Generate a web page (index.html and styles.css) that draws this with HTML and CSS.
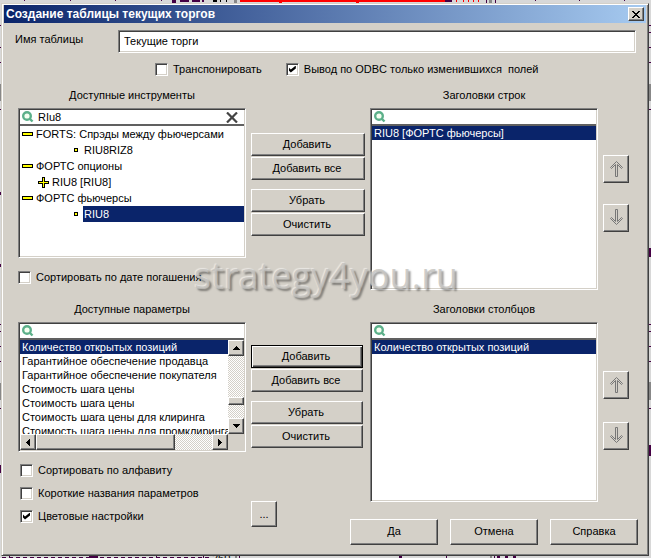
FILE: index.html
```html
<!DOCTYPE html>
<html lang="ru">
<head>
    <meta charset="UTF-8">
    <meta name="viewport" content="width=device-width, initial-scale=1.0">
    <title>Создание таблицы текущих торгов</title>
    <link rel="stylesheet" href="styles.css">
</head>
<body>
    <!-- chart windows behind the dialog -->
    <svg class="backdrop" viewBox="0 0 651 558" shape-rendering="crispEdges" aria-hidden="true">
        <path d="M240 0h206v2H240zM279 2h3v1h-3zM356 2h3v1h-3zM456 0h1v2h-1zM463 0h1v2h-1zM468 0h1v2h-1zM473 0h1v2h-1zM478 0h1v2h-1z" fill="#f00"/>
        <path d="M172 0h4v3h-4zM180 0h9v2h-9zM192 0h8v2h-8zM202 0h2v2h-2zM445 0h7v2h-7zM486 0h1v3h-1zM495 0h1v3h-1zM24 0h1v1h-1zM70 0h1v1h-1zM115 0h1v1h-1zM161 0h1v1h-1zM535 0h1v1h-1zM579 0h1v1h-1zM624 0h1v1h-1z" fill="#404"/>
        <path d="M213 0h4v2h-4zM220 0h1v2h-1zM226 0h1v2h-1z" fill="#000"/>
        <path d="M234 0h3v4h-3zM489 0h3v4h-3zM235 554h2v4h-2zM490 554h2v4h-2zM0 84h2v17H0zM0 383h2v17H0zM649 84h2v17h-2zM649 382h2v18h-2z" fill="#888"/>
        <path d="M9 554h1v4H9zM82 554h2v2h-2zM89 554h9v4h-9zM156 554h1v4h-1zM203 554h1v4h-1zM239 554h1v4h-1zM399 554h3v4h-3zM446 554h1v4h-1zM447 555h3v1h-3zM494 554h1v4h-1zM497 554h3v4h-3zM505 554h3v4h-3zM513 554h3v4h-3z" fill="#404"/>
        <path d="M0 25h2v1H0zM0 47h2v1H0zM0 62h2v1H0zM0 109h2v1H0zM0 192h1v3H0zM0 264h1v3H0zM0 324h2v1H0zM0 331h2v1H0zM0 346h2v1H0zM0 361h2v1H0zM0 408h2v1H0zM0 465h1v8H0zM649 25h2v1h-2zM649 32h2v1h-2zM649 47h2v1h-2zM649 62h2v1h-2zM649 109h2v1h-2zM649 248h2v9h-2zM649 324h2v1h-2zM649 331h2v1h-2zM649 346h2v1h-2zM649 361h2v1h-2zM649 408h2v1h-2zM649 445h2v11h-2z" fill="#404"/>
        <path d="M2 557.5h208" stroke="#404" stroke-dasharray="4 3"/>
        <text x="212" y="562" font-family="Liberation Sans" font-size="11">260</text>
    </svg>

    <form class="dialog">
        <header class="title-bar">
            <h1>Создание таблицы текущих торгов</h1>
            <button type="button" class="close-btn" aria-label="Закрыть">
                <svg width="8" height="7" viewBox="0 0 8 7" shape-rendering="crispEdges"><path d="M0 0h2v1h1v1h2v-1h1v-1h2v1h-1v1h-1v1h-1v1h1v1h1v1h1v1h-2v-1h-1v-1h-2v1h-1v1h-2v-1h1v-1h1v-1h1v-1h-1v-1h-1v-1h-1z"/></svg>
            </button>
        </header>

        <div class="name-row">
            <label for="tableName">Имя таблицы</label>
            <input type="text" id="tableName" class="name-input" value="Текущие торги">
        </div>

        <div class="option-row">
            <label class="check"><input type="checkbox">Транспонировать</label>
            <label class="check"><input type="checkbox" checked>Вывод по ODBC только изменившихся&nbsp; полей</label>
        </div>

        <section class="picker">
            <div class="source">
                <h2>Доступные инструменты</h2>
                <div class="list-box">
                    <div class="search">
                        <svg class="lens" width="12" height="12" viewBox="0 0 12 12"><circle cx="5" cy="5" r="3.8"/><path d="M7.5 7.5l3 3"/></svg>
                        <input type="text" value="RIu8" aria-label="Поиск инструмента">
                        <button type="button" class="clear-btn" aria-label="Стереть">
                            <svg width="12" height="11" viewBox="0 0 12 11"><path d="M1 .5l10 10M11 .5l-10 10"/></svg>
                        </button>
                    </div>
                    <ul class="tree">
                        <li><i class="minus"></i><span>FORTS: Спрэды между фьючерсами</span></li>
                        <li class="leaf"><i class="dot"></i><span>RIU8RIZ8</span></li>
                        <li><i class="minus"></i><span>ФОРТС опционы</span></li>
                        <li class="branch"><svg width="11" height="11" viewBox="0 0 11 11" shape-rendering="crispEdges"><path d="M4 0h3v4h4v3h-4v4h-3v-4h-4v-3h4z" fill="#000"/><path d="M5 1h1v4h4v1h-4v4h-1v-4h-4v-1h4z" fill="#ff0"/></svg><span>RIU8 [RIU8]</span></li>
                        <li><i class="minus"></i><span>ФОРТС фьючерсы</span></li>
                        <li class="leaf selected"><i class="dot"></i><span>RIU8</span></li>
                    </ul>
                </div>
                <label class="check"><input type="checkbox">Сортировать по дате погашения</label>
            </div>
            <div class="actions">
                <button type="button">Добавить</button>
                <button type="button">Добавить все</button>
                <button type="button" class="spaced">Убрать</button>
                <button type="button">Очистить</button>
            </div>
            <div class="target">
                <h2>Заголовки строк</h2>
                <div class="list-box">
                    <div class="search">
                        <svg class="lens" width="12" height="12" viewBox="0 0 12 12"><circle cx="5" cy="5" r="3.8"/><path d="M7.5 7.5l3 3"/></svg>
                        <input type="text" aria-label="Поиск строки">
                    </div>
                    <ul class="rows">
                        <li class="selected">RIU8 [ФОРТС фьючерсы]</li>
                    </ul>
                </div>
            </div>
            <div class="order">
                <button type="button" aria-label="Выше">
                    <svg width="15" height="17" viewBox="0 0 15 17"><path d="M7.500 1.500l6 6-1 1-4-4v12h-2v-12l-4 4-1-1z"/></svg>
                </button>
                <button type="button" aria-label="Ниже">
                    <svg width="15" height="17" viewBox="0 0 15 17"><path d="M7.500 15.500l6-6-1-1-4 4v-12h-2v12l-4-4-1 1z"/></svg>
                </button>
            </div>
        </section>

        <section class="picker params">
            <div class="source">
                <h2>Доступные параметры</h2>
                <div class="list-box">
                    <div class="search">
                        <svg class="lens" width="12" height="12" viewBox="0 0 12 12"><circle cx="5" cy="5" r="3.8"/><path d="M7.5 7.5l3 3"/></svg>
                        <input type="text" aria-label="Поиск параметра">
                    </div>
                    <div class="scroll-area">
                        <ul class="rows">
                            <li class="selected">Количество открытых позиций</li>
                            <li>Гарантийное обеспечение продавца</li>
                            <li>Гарантийное обеспечение покупателя</li>
                            <li>Стоимость шага цены</li>
                            <li>Стоимость шага цены</li>
                            <li>Стоимость шага цены для клиринга</li>
                            <li>Стоимость шага цены для промклиринга</li>
                        </ul>
                        <div class="scrollbar vertical">
                            <button type="button" aria-label="Вверх"><svg width="7" height="4" viewBox="0 0 7 4" shape-rendering="crispEdges"><path d="M3 0h1v1h1v1h1v1h1v1h-7v-1h1v-1h1v-1h1z"/></svg></button>
                            <div class="thumb"></div>
                            <button type="button" aria-label="Вниз"><svg width="7" height="4" viewBox="0 0 7 4" shape-rendering="crispEdges"><path d="M0 0h7v1h-1v1h-1v1h-1v1h-1v-1h-1v-1h-1v-1h-1z"/></svg></button>
                        </div>
                        <div class="scrollbar horizontal">
                            <button type="button" aria-label="Влево"><svg width="4" height="7" viewBox="0 0 4 7" shape-rendering="crispEdges"><path d="M4 0v7h-1v-1h-1v-1h-1v-1h-1v-1h1v-1h1v-1h1v-1z"/></svg></button>
                            <div class="thumb"></div>
                            <button type="button" aria-label="Вправо"><svg width="4" height="7" viewBox="0 0 4 7" shape-rendering="crispEdges"><path d="M0 0h1v1h1v1h1v1h1v1h-1v1h-1v1h-1v1h-1z"/></svg></button>
                        </div>
                    </div>
                </div>
            </div>
            <div class="actions">
                <button type="button" class="default">Добавить</button>
                <button type="button">Добавить все</button>
                <button type="button" class="spaced">Убрать</button>
                <button type="button">Очистить</button>
            </div>
            <div class="target">
                <h2>Заголовки столбцов</h2>
                <div class="list-box">
                    <div class="search">
                        <svg class="lens" width="12" height="12" viewBox="0 0 12 12"><circle cx="5" cy="5" r="3.8"/><path d="M7.5 7.5l3 3"/></svg>
                        <input type="text" aria-label="Поиск столбца">
                    </div>
                    <ul class="rows">
                        <li class="selected">Количество открытых позиций</li>
                    </ul>
                </div>
            </div>
            <div class="order">
                <button type="button" aria-label="Выше">
                    <svg width="15" height="17" viewBox="0 0 15 17"><path d="M7.500 1.500l6 6-1 1-4-4v12h-2v-12l-4 4-1-1z"/></svg>
                </button>
                <button type="button" aria-label="Ниже">
                    <svg width="15" height="17" viewBox="0 0 15 17"><path d="M7.500 15.500l6-6-1-1-4 4v-12h-2v12l-4-4-1 1z"/></svg>
                </button>
            </div>
        </section>

        <footer class="bottom">
            <div class="settings">
                <label class="check"><input type="checkbox">Сортировать по алфавиту</label>
                <label class="check"><input type="checkbox">Короткие названия параметров</label>
                <label class="check"><input type="checkbox" checked>Цветовые настройки</label>
            </div>
            <button type="button" class="more-btn">...</button>
            <div class="commands">
                <button type="submit">Да</button>
                <button type="button">Отмена</button>
                <button type="button">Справка</button>
            </div>
        </footer>

        <div class="watermark">strategy4you.ru</div>
    </form>
</body>
</html>
```
FILE: styles.css
```css
* {
    margin: 0;
    padding: 0;
    box-sizing: border-box;
}

body {
    font-family: "Liberation Sans", Arial, sans-serif;
    font-size: 11px;
    line-height: 14px;
    color: #000;
    background: #d8d8d8;
    min-height: 100vh;
    padding: 3px 2px 3px 1px;
    overflow: hidden;
}

ul {
    list-style: none;
}

.backdrop {
    position: absolute;
    top: 0;
    left: 0;
    width: 100%;
}

.dialog {
    position: relative;
    background: #d4d0c8;
    border: 1px solid;
    border-color: #d4d0c8 #404040 #404040 #d4d0c8;
    box-shadow: inset 1px 1px #fff, inset -1px -1px #808080;
    padding: 1px 2px 9px 2px;
}

/* title bar */
.title-bar {
    display: flex;
    align-items: center;
    justify-content: space-between;
    height: 18px;
    padding: 0 2px;
    background: linear-gradient(to right, #0a246a, #a6caf0);
}

.title-bar h1 {
    font-size: 12px;
    font-weight: bold;
    color: #fff;
}

/* raised controls */
button {
    font: inherit;
    color: #000;
    background: #d4d0c8;
    border: 1px solid;
    border-color: #fff #404040 #404040 #fff;
    box-shadow: inset -1px -1px #808080;
    display: flex;
    align-items: center;
    justify-content: center;
}

.close-btn {
    width: 16px;
    height: 14px;
}

/* sunken controls */
.name-input,
.list-box,
.check input {
    background: #fff;
    border: 1px solid;
    border-color: #808080 #fff #fff #808080;
    box-shadow: inset 1px 1px #404040, inset -1px -1px #d4d0c8;
}

.name-row {
    display: flex;
    padding: 7px 10px 0 11px;
}

.name-row label {
    width: 103px;
    padding-top: 2px;
}

.name-input {
    flex: 1;
    height: 23px;
    padding: 0 5px 2px;
    font: inherit;
}

.check {
    display: flex;
    align-items: center;
    gap: 5px;
    height: 14px;
}

.check input {
    appearance: none;
    width: 13px;
    height: 13px;
}

.check input:checked::after {
    content: "";
    display: block;
    width: 7px;
    height: 7px;
    margin: 2px;
    background: #000;
    clip-path: polygon(0 2px, 2px 4px, 7px 0, 7px 3px, 2px 7px, 0 5px);
}

.option-row {
    display: flex;
    gap: 24px;
    padding: 9px 0 0 151px;
}

/* list pickers */
.picker {
    display: grid;
    grid-template-columns: 1fr 114px 1fr 26px;
    column-gap: 5px;
    padding: 12px 17px 0 14px;
}

.picker h2 {
    font-size: 11px;
    font-weight: normal;
    text-align: center;
    margin-bottom: 6px;
}

.list-box {
    display: flex;
    flex-direction: column;
    padding: 1px;
}

.source .list-box {
    height: 150px;
}

.target .list-box {
    height: 182px;
}

.source .check {
    margin-top: 12px;
}

.search {
    display: flex;
    align-items: center;
    height: 16px;
    padding: 0 6px 0 2px;
    border-bottom: 2px solid #606060;
}

.search input {
    flex: 1;
    min-width: 0;
    padding: 0 4px;
    font: inherit;
    border: none;
    background: none;
}

.lens {
    fill: #f4fff0;
    stroke: #5cb08a;
    stroke-width: 2.4;
}

.clear-btn {
    border: none;
    background: none;
    box-shadow: none;
}

.clear-btn svg {
    stroke: #444;
    stroke-width: 2.2;
}

.tree li {
    display: flex;
    align-items: center;
    height: 16px;
    padding-left: 2px;
    white-space: nowrap;
}

.tree li span {
    padding-left: 3px;
}

.tree .branch {
    padding-left: 18px;
}

.tree .leaf {
    padding-left: 54px;
}

.tree .leaf span {
    flex: 1;
    height: 16px;
    line-height: 16px;
    margin-left: 5px;
    padding-left: 1px;
}

.minus {
    width: 11px;
    height: 4px;
    background: #ff0;
    border: 1px solid #000;
}

.dot {
    width: 4px;
    height: 4px;
    background: #ff0;
    border: 1px solid #000;
}

.selected,
.tree .selected span {
    color: #fff;
    background: #0a246a;
}

.tree .selected {
    background: none;
}

.rows li {
    height: 14px;
    padding-left: 2px;
    white-space: nowrap;
}

.actions {
    padding-top: 45px;
    display: flex;
    flex-direction: column;
    gap: 1px;
}

.actions button {
    height: 23px;
    padding: 0 2px 2px 0;
}

.actions .spaced {
    margin-top: 8px;
}

.actions .default {
    border-color: #000;
    box-shadow: inset 1px 1px #fff, inset -1px -1px #404040, inset -2px -2px #808080;
}

.order {
    display: flex;
    flex-direction: column;
    gap: 21px;
    padding-top: 67px;
}

.order button {
    height: 28px;
    padding-bottom: 2px;
}

.order svg {
    fill: none;
    stroke: #777;
}

.params .target .list-box {
    height: 180px;
}

.params .source .list-box {
    height: 130px;
}

.params .actions {
    padding: 43px 2px 0 0;
}

.params .order {
    gap: 23px;
    padding-top: 69px;
}

/* scroll bars */
.scroll-area {
    flex: 1;
    min-height: 0;
    display: grid;
    grid-template-columns: 1fr 16px;
    grid-template-rows: 1fr 16px;
    background: #d4d0c8;
}

.scroll-area .rows {
    min-width: 0;
    min-height: 0;
    overflow: hidden;
    background: #fff;
}

.scrollbar {
    display: flex;
    background: repeating-conic-gradient(#fff 0 25%, #d4d0c8 0 50%) 0 0 / 2px 2px;
}

.scrollbar button {
    flex: none;
    width: 16px;
    height: 16px;
}

.thumb {
    background: #d4d0c8;
    border: 1px solid;
    border-color: #fff #404040 #404040 #fff;
    box-shadow: inset -1px -1px #808080;
}

.vertical {
    flex-direction: column;
    justify-content: space-between;
}

.vertical .thumb {
    height: 8px;
    margin-top: 28px;
}

.horizontal .thumb {
    width: 67%;
    margin-right: auto;
}

/* bottom area */
.bottom {
    display: flex;
    align-items: flex-end;
    margin-top: -39px;
    padding: 0 8px 0 16px;
}

.settings {
    display: flex;
    flex-direction: column;
    gap: 9px;
    width: 231px;
    padding-bottom: 23px;
}

.more-btn {
    width: 26px;
    height: 26px;
    margin-bottom: 19px;
}

.commands {
    display: flex;
    gap: 12px;
    margin-left: auto;
}

.commands button {
    width: 88px;
    height: 26px;
    padding-bottom: 2px;
}

.bottom .commands {
    margin-bottom: 1px;
}

.watermark {
    position: absolute;
    top: 248px;
    left: 192px;
    font-family: "Open Sans", sans-serif;
    font-size: 36px;
    line-height: 48px;
    color: rgba(192, 190, 186, 0.75);
    text-shadow: -1px -1px 1px rgba(255, 255, 255, 0.5), 2px 2px 2px rgba(0, 0, 0, 0.4);
    pointer-events: none;
}
```
